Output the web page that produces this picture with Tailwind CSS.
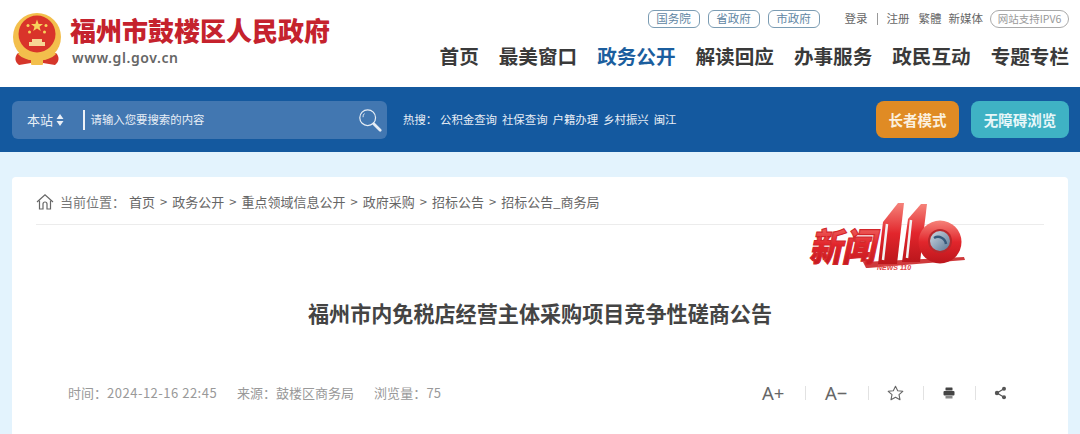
<!doctype html>
<html lang="zh-CN">
<head>
<meta charset="utf-8">
<script src="https://cdn.jsdelivr.net/npm/@tailwindcss/browser@4"></script>
</head>
<body class="m-0 h-[434px] w-[1080px] overflow-hidden bg-[#e3f3fd] font-['Noto_Sans_CJK_SC','Noto_Sans',sans-serif] text-[#555]">
<header class="flex h-[87px] justify-between bg-white pl-3 pr-[11px]">
  <div class="flex items-start">
    <svg class="mt-[13px] h-[54px] w-[50px]" viewBox="0 0 50 54">
      <path d="M6 40 C2 44 3 49 7 52 L19 50 L25 52 L31 50 L43 52 C47 49 48 44 44 40 Z" fill="#d5362a"/>
      <circle cx="25" cy="24" r="24" fill="#f3bf4c"/>
      <circle cx="25" cy="21" r="18.5" fill="#d9342a"/>
      <polygon points="25,6.5 26.6,11 31,11 27.5,13.8 28.8,18 25,15.5 21.2,18 22.5,13.8 19,11 23.4,11" fill="#f7d25c"/>
      <circle cx="16" cy="12.5" r="1.5" fill="#f7d25c"/><circle cx="34" cy="12.5" r="1.5" fill="#f7d25c"/>
      <circle cx="17.5" cy="19" r="1.5" fill="#f7d25c"/><circle cx="32.5" cy="19" r="1.5" fill="#f7d25c"/>
      <path d="M17 33 V29 H20 V26 H30 V29 H33 V33 Z" fill="#f7d694"/>
      <path d="M9 37 C15 44 35 44 41 37 L44 41 C36 50 14 50 6 41 Z" fill="#f3bf4c"/>
      <rect x="19" y="46" width="12" height="6" rx="1" fill="#f3bf4c"/>
    </svg>
    <div class="ml-2">
      <div class="mt-[13px] text-[26px] leading-[34px] font-black text-[#c5222d]">福州市鼓楼区人民政府</div>
      <div class="ml-[2px] mt-[2px] text-[14px] leading-[18px] font-semibold tracking-[0.6px] text-[#666] font-['Noto_Sans',sans-serif]">www.gl.gov.cn</div>
    </div>
  </div>
  <div class="flex flex-col items-end">
    <div class="mt-[9px] flex h-[19px] items-center text-[11.5px] text-[#666]">
      <a class="flex h-[18px] w-[52px] items-center justify-center rounded-[6px] border border-[#7b9cb3] text-[#5f86a3]">国务院</a>
      <a class="ml-[8px] flex h-[18px] w-[52px] items-center justify-center rounded-[6px] border border-[#7b9cb3] text-[#5f86a3]">省政府</a>
      <a class="ml-[8px] flex h-[18px] w-[52px] items-center justify-center rounded-[6px] border border-[#7b9cb3] text-[#5f86a3]">市政府</a>
      <span class="ml-[25px]">登录</span>
      <span class="mx-[9px] h-[12px] w-px bg-[#999]"></span>
      <span>注册</span>
      <span class="ml-[9px]">繁體</span>
      <span class="ml-[7px]">新媒体</span>
      <span class="ml-[7px] flex h-[18px] w-[79px] items-center justify-center rounded-full border border-[#aaa] text-[10.5px] text-[#999]">网站支持IPV6</span>
    </div>
    <nav class="mt-[14px] flex gap-[20px] text-[19.6px] leading-[28px] font-semibold text-[#3a3a3a]">
      <a>首页</a><a>最美窗口</a><a class="text-[#1b5e9e]">政务公开</a><a>解读回应</a><a>办事服务</a><a>政民互动</a><a>专题专栏</a>
    </nav>
  </div>
</header>

<section class="flex h-[65px] items-center bg-[#14599f] pl-3 pr-[11px]">
  <div class="flex h-[38px] w-[375px] items-center rounded-[6px] bg-[#4277b1] pl-[15px] pr-[4px] text-white">
    <span class="text-[13px] text-[#e8eef6]">本站</span>
    <svg class="ml-[3px] h-[14px] w-[8px]" viewBox="0 0 8 14" fill="#e8eef6"><path d="M4 1 L7.5 6 H.5Z M4 13 L.5 8 H7.5Z"/></svg>
    <span class="ml-[19px] h-[20px] w-[1.5px] bg-white/90"></span>
    <span class="ml-[6px] flex-1 text-[11.4px] text-[#e8eef6]">请输入您要搜索的内容</span>
    <svg class="h-[26px] w-[26px]" viewBox="0 0 28 28" fill="none" stroke="#e6edf5"><circle cx="11.5" cy="11.5" r="8.5" stroke-width="1.3"/><path d="M8 7 A5 5 0 0 0 6.5 11" stroke-width="1"/><path d="M18 18 L25 25" stroke-width="3" stroke-linecap="round"/></svg>
  </div>
  <div class="ml-[16px] flex flex-1 items-center text-[11.4px] text-[#e8eef6]">
    <span class="w-[37px]">热搜：</span>
    <div class="flex gap-[5px]"><a>公积金查询</a><a>社保查询</a><a>户籍办理</a><a>乡村振兴</a><a>闽江</a></div>
  </div>
  <a class="flex h-[37px] w-[83px] items-center justify-center rounded-[8px] bg-[#e08b24] text-[14.5px] font-bold text-[#fbf0df]">长者模式</a>
  <a class="ml-[12px] flex h-[37px] w-[98px] items-center justify-center rounded-[8px] bg-[#3fb2c4] text-[14.5px] font-bold text-[#e8f7f9]">无障碍浏览</a>
</section>

<main class="relative mx-3 mt-[25px] h-[257px] rounded-t-[4px] bg-white px-[24px]">
  <div class="flex h-[48px] items-center border-b border-[#ececec] pt-[3px] text-[13px] text-[#777]">
    <svg class="h-[18px] w-[18px]" viewBox="0 0 18 18" fill="none" stroke="#666" stroke-width="1.2"><path d="M1 9 L9 1.7 L17 9"/><path d="M3.5 7.5 V16 H7 V11 A2 2 0 0 1 11 11 V16 H14.5 V7.5"/></svg>
    <span class="ml-[6px]">当前位置：</span>
    <span class="ml-[4px] flex gap-[5px] text-[#666]"><a>首页</a><i class="not-italic">&gt;</i><a>政务公开</a><i class="not-italic">&gt;</i><a>重点领域信息公开</a><i class="not-italic">&gt;</i><a>政府采购</a><i class="not-italic">&gt;</i><a>招标公告</a><i class="not-italic">&gt;</i><a>招标公告_商务局</a></span>
  </div>

  <svg class="absolute left-[796px] top-[25px] h-[70px] w-[158px]" viewBox="0 0 158 70">
    <defs>
      <linearGradient id="r" x1="0" y1="0" x2="0" y2="1"><stop offset="0" stop-color="#f5837a"/><stop offset=".5" stop-color="#e2262c"/><stop offset="1" stop-color="#bb161c"/></linearGradient>
      <linearGradient id="b" x1="0" y1="0" x2="1" y2="1"><stop offset="0" stop-color="#cfd8e2"/><stop offset="1" stop-color="#5a7896"/></linearGradient>
    </defs>
    <path d="M55 60 L156 55 L157 58 L60 66 L58 66Z" fill="#cf3a3c"/>
    <text transform="translate(1 59) scale(1 1.15)" font-size="33" font-weight="900" font-style="italic" fill="url(#r)" stroke="#d3262a" stroke-width="1" font-family="Noto Sans CJK SC">新闻</text>
    <polygon points="75,20 90,1 96,1 89,62 70,62" fill="url(#r)"/>
    <polygon points="100,17 113,2 119,2 112,60 94,60" fill="url(#r)"/>
    <path d="M79 22 L75 58 M103 18 L99 56" stroke="#f2f2f2" stroke-width="2.5"/>
    <circle cx="132" cy="40" r="21.5" fill="url(#r)"/>
    <circle cx="132" cy="39" r="12" fill="#b8282c"/>
    <circle cx="132" cy="39" r="10" fill="url(#b)"/>
    <path d="M126 36 A8 8 0 0 1 138 42" stroke="#36587a" stroke-width="2.5" fill="none"/>
    <text x="69" y="68" font-size="7" font-weight="700" font-style="italic" fill="#e04548" font-family="Liberation Sans">NEWS 110</text>
  </svg>

  <h1 class="mt-[72px] text-center text-[21.1px] leading-[32px] font-semibold text-[#444]">福州市内免税店经营主体采购项目竞争性磋商公告</h1>

  <div class="mt-[48px] flex h-[32px] items-center text-[13px] text-[#999]">
    <div class="ml-[32px] flex">
      <span class="w-[169px]">时间：<span class="tracking-[0.5px]">2024-12-16 22:45</span></span>
      <span class="w-[137px]">来源：鼓楼区商务局</span>
      <span class="tracking-[0.1px]">浏览量：75</span>
    </div>
    <div class="ml-auto mr-[37px] flex items-center text-[#666]">
      <span class="w-[22px] text-[18.5px] font-['Noto_Sans',sans-serif]">A+</span>
      <span class="ml-[21px] mr-[19px] h-[14px] w-px bg-[#e2e2e2]"></span>
      <span class="w-[22px] text-[18.5px] font-['Noto_Sans',sans-serif]">A−</span>
      <span class="ml-[21px] mr-[18px] h-[14px] w-px bg-[#e2e2e2]"></span>
      <svg class="h-[16px] w-[17px]" viewBox="0 0 17 16" fill="none" stroke="#666" stroke-width="1.1" stroke-linejoin="round"><polygon points="8.5,1.2 10.7,5.7 15.8,6.3 12,9.7 13,14.7 8.5,12.2 4,14.7 5,9.7 1.2,6.3 6.3,5.7"/></svg>
      <span class="ml-[19px] mr-[19px] h-[14px] w-px bg-[#e2e2e2]"></span>
      <svg class="h-[12px] w-[12px]" viewBox="0 0 12 12" fill="#444"><rect x="2.5" y="0.5" width="7" height="3" rx=".5"/><rect x="0.5" y="4" width="11" height="4.5" rx="1"/><rect x="2.5" y="9" width="7" height="2.5" fill="#888"/></svg>
      <span class="ml-[20px] mr-[18px] h-[14px] w-px bg-[#e2e2e2]"></span>
      <svg class="h-[14px] w-[13px]" viewBox="0 0 13 14" fill="#555" stroke="#555"><path d="M10 2.8 L3 7 L10 11.2" fill="none" stroke-width="1.2"/><circle cx="10" cy="2.8" r="2" stroke="none"/><circle cx="3" cy="7" r="2.2" stroke="none"/><circle cx="10" cy="11.2" r="2" stroke="none"/></svg>
    </div>
  </div>
</main>
</body>
</html>
